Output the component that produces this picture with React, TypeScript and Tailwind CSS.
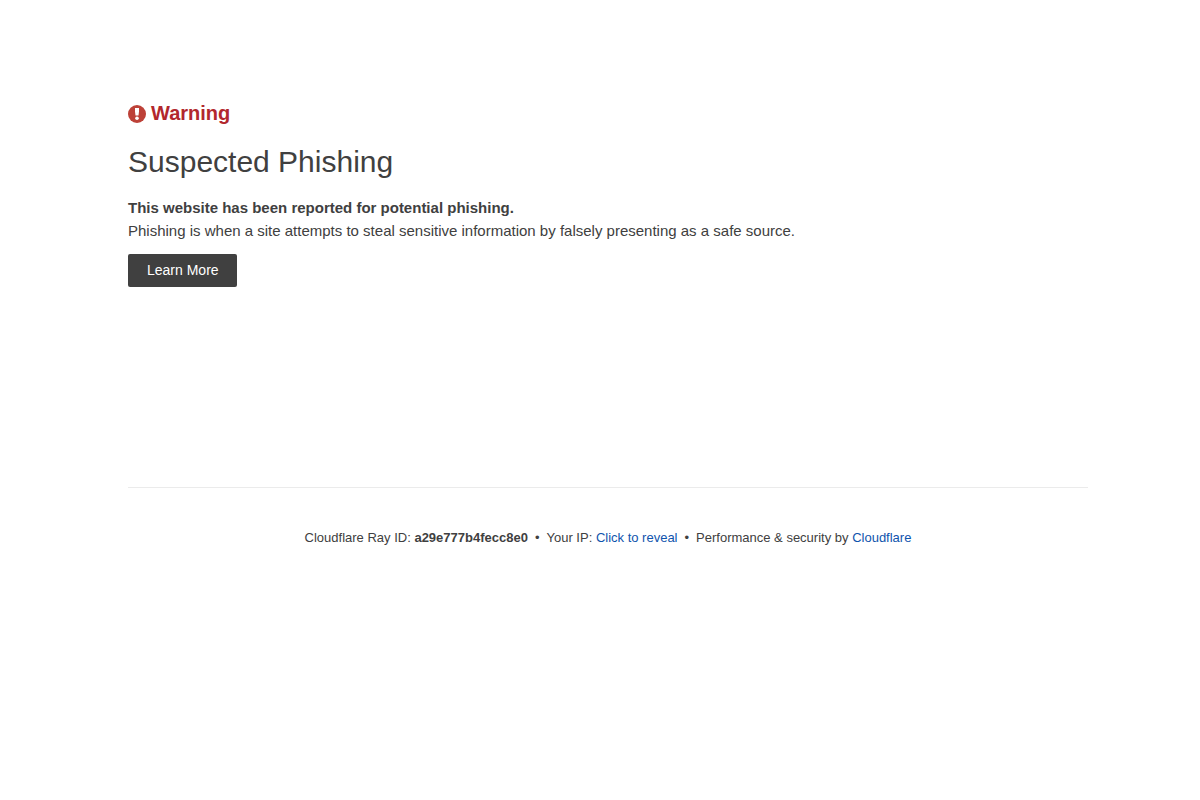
const RAY_ID = 'a29e777b4fecc8e0';

function WarningIcon() {
    return (
        <svg viewBox="0 0 18 18" className="mt-0.5 size-[18px] shrink-0" aria-hidden="true">
            <circle cx="9" cy="9" r="9" fill="#bd4138" />
            <path d="M7 3h4v3.6l-.5 4h-3L7 6.600z" fill="#fff" />
            <circle cx="9" cy="13.200" r="1.800" fill="#fff" />
        </svg>
    );
}

function Separator() {
    return <span className="mx-[7px]">•</span>;
}

export default function App() {
    return (
        <div className="font-['Liberation_Sans',Arial,sans-serif] text-[15px] leading-[23px] text-[#404040]">
            <div className="mx-auto w-full max-w-[976px] pl-4">
                <main className="pt-[98px]">
                    <div className="flex items-center gap-[5px] text-[#b2272d]">
                        <WarningIcon />
                        <span className="text-xl leading-[30px] font-bold">Warning</span>
                    </div>
                    <h1 className="mt-3 text-[30px] leading-[44px]">Suspected Phishing</h1>

                    <div className="mt-3">
                        <p className="font-bold">This website has been reported for potential phishing.</p>
                        <p>Phishing is when a site attempts to steal sensitive information by falsely presenting as a safe source.</p>
                    </div>

                    <a
                        href="#learn-more"
                        className="mt-3 inline-block rounded-xs bg-[#404040] pr-[18px] pl-[19px] py-1.5 text-sm leading-[21px] text-white hover:bg-[#595959]"
                    >
                        Learn More
                    </a>
                </main>

                {/* Ray ID, visitor IP and attribution */}
                <footer className="mt-[200px] border-t border-[#ebebeb] pt-10 text-center text-[13px] leading-5">
                    <p>
                        <span>
                            Cloudflare Ray ID: <strong>{RAY_ID}</strong>
                        </span>
                        <Separator />
                        <span>
                            Your IP:{' '}
                            <button type="button" className="cursor-pointer text-[#0f54ad]">
                                Click to reveal
                            </button>
                        </span>
                        <Separator />
                        <span>
                            Performance &amp; security by{' '}
                            <a href="#cloudflare" className="text-[#0f54ad]">
                                Cloudflare
                            </a>
                        </span>
                    </p>
                </footer>
            </div>
        </div>
    );
}
